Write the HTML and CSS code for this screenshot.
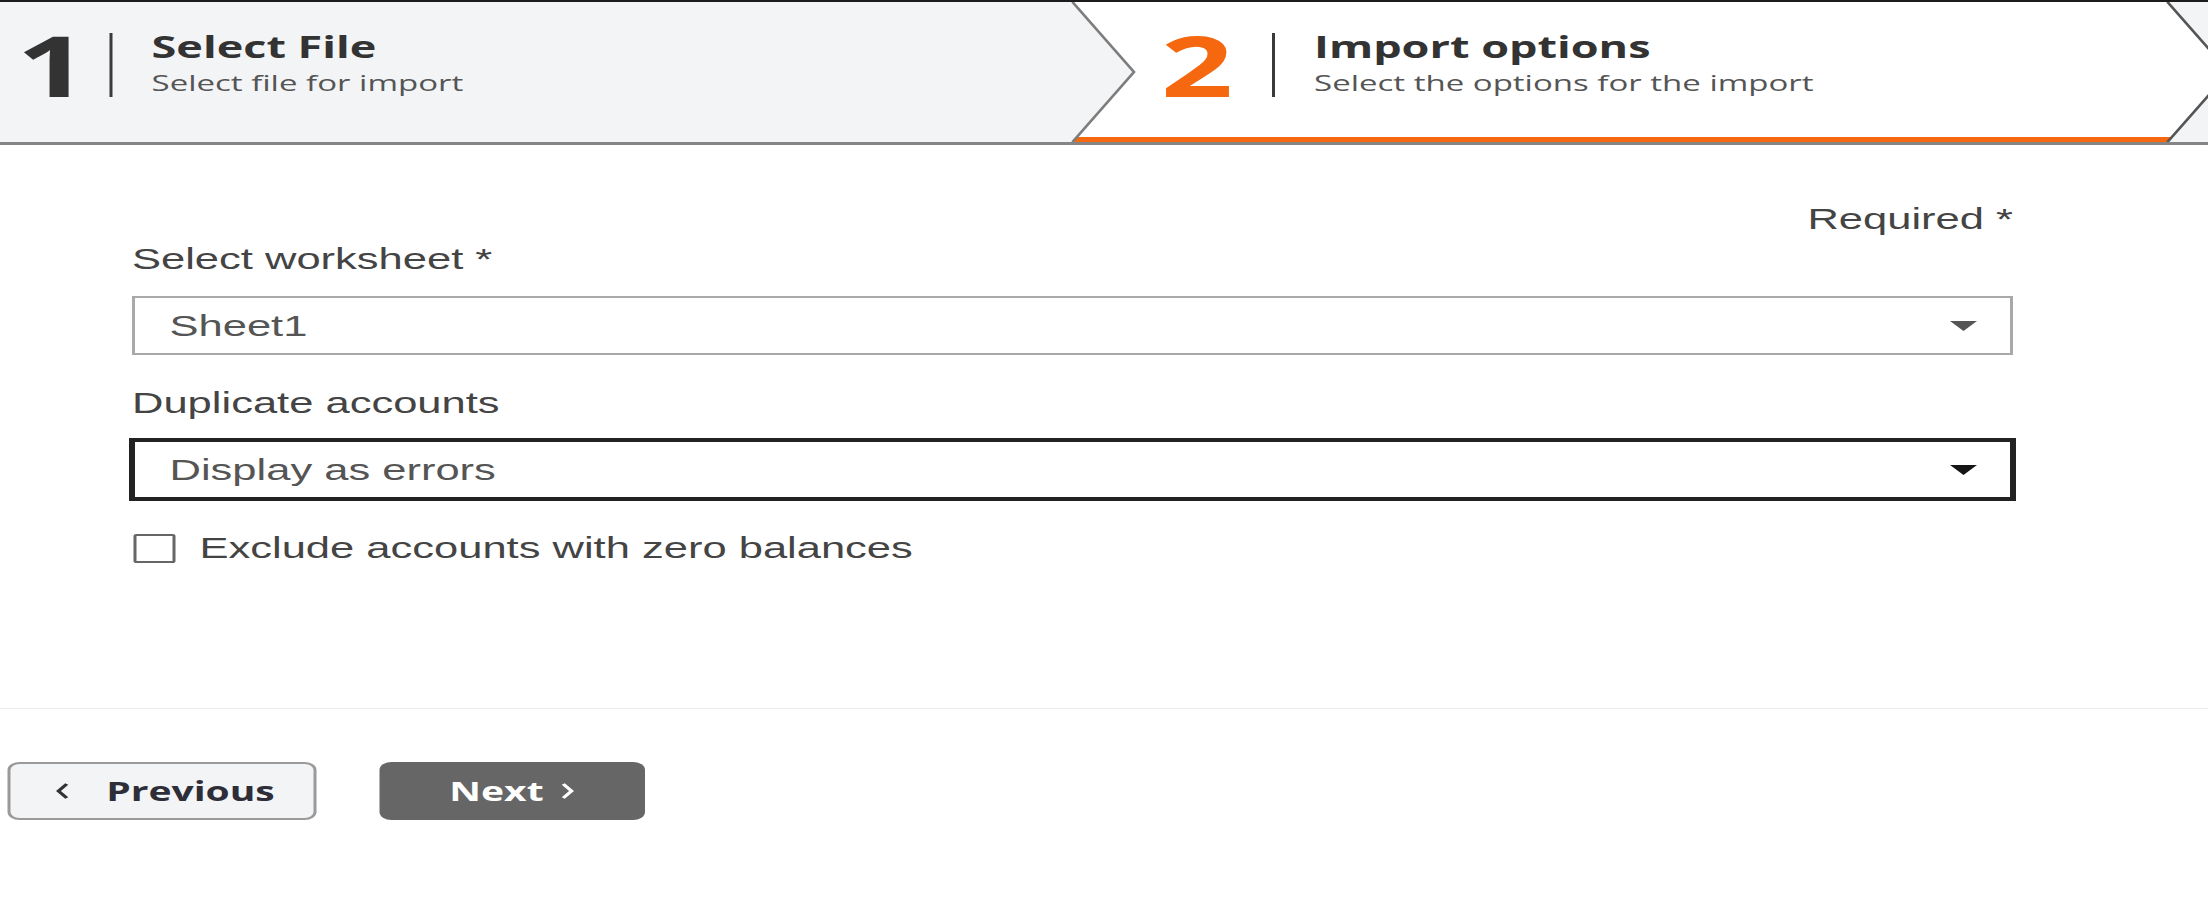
FILE: index.html
```html
<!DOCTYPE html>
<html lang="en">
<head>
<meta charset="utf-8">
<title>Import wizard</title>
<link rel="stylesheet" href="styles.css">
</head>
<body>
<div class="page">
  <header class="wizard">
    <svg class="wizard-bg" viewBox="0 0 1472 140" preserveAspectRatio="none" aria-hidden="true">
      <polygon points="715,0 1445,0 1486,70 1445,140 715,140 756,70" fill="#ffffff"/>
      <polygon points="718,135 1448,135 1445,140 715,140" fill="#f5680f"/>
      <polyline points="715,0 756,70 715,140" fill="none" stroke="#7d7d7d" stroke-width="2"/>
      <polyline points="1445,0 1486,70 1445,140" fill="none" stroke="#555" stroke-width="2"/>
    </svg>
    <div class="step step-done">
      <div class="step-num">1</div>
      <div class="step-sep"></div>
      <div class="step-text">
        <div class="step-title">Select File</div>
        <div class="step-sub">Select file for import</div>
      </div>
    </div>
    <div class="step step-active">
      <div class="step-num">2</div>
      <div class="step-sep"></div>
      <div class="step-text">
        <div class="step-title">Import options</div>
        <div class="step-sub">Select the options for the import</div>
      </div>
    </div>
  </header>

  <main class="form">
    <div class="required">Required *</div>
    <div class="field">
      <label class="field-label">Select worksheet *</label>
      <div class="select"><span>Sheet1</span><span class="caret"></span></div>
    </div>
    <div class="field field-gap">
      <label class="field-label">Duplicate accounts</label>
      <div class="select select-focus"><span>Display as errors</span><span class="caret caret-dark"></span></div>
    </div>
    <label class="check"><span class="check-box"></span><span>Exclude accounts with zero balances</span></label>
  </main>

  <footer class="actions">
    <button class="btn btn-prev" type="button">
      <svg class="chev" viewBox="0 0 9 18" aria-hidden="true"><polyline points="7.5,2 2,9 7.5,16" fill="none" stroke="#333" stroke-width="2.6"/></svg>
      <span>Previous</span>
    </button>
    <button class="btn btn-next" type="button">
      <span>Next</span>
      <svg class="chev" viewBox="0 0 9 18" aria-hidden="true"><polyline points="1.5,2 7,9 1.5,16" fill="none" stroke="#fff" stroke-width="2.6"/></svg>
    </button>
  </footer>
</div>
</body>
</html>
```
FILE: styles.css
```css
html, body {
  margin: 0;
  padding: 0;
  background: #ffffff;
  overflow: hidden;
}

.page {
  width: 1472px;
  transform: scaleX(1.5);
  transform-origin: 0 0;
  font-family: "Liberation Sans", Arial, sans-serif;
  color: #444;
}

/* ---------- wizard header ---------- */
.wizard {
  position: relative;
  display: flex;
  height: 140px;
  background: #f3f4f6;
  border-top: 2px solid #1c1c1c;
  border-bottom: 3px solid #858585;
}

.wizard-bg {
  position: absolute;
  left: 0;
  top: 0;
  width: 100%;
  height: 100%;
}

.step {
  position: relative;
  display: flex;
  align-items: flex-start;
  box-sizing: border-box;
}

.step-done {
  width: 756px;
  padding-left: 11px;
}

.step-active {
  flex: 1;
  padding-left: 18px;
}

.step-num {
  margin-top: 21px;
  font-family: "Open Sans", sans-serif;
  font-weight: 700;
  font-size: 84px;
  line-height: 83px;
  color: #333333;
}

.step-active .step-num {
  color: #f5680f;
}

.step-sep {
  width: 2px;
  height: 64px;
  margin: 31px 26px 0 26px;
  background: #3a3a3a;
}

.step-done .step-sep {
  margin-left: 14px;
}

.step-text {
  margin-top: 28px;
  font-family: "Open Sans", sans-serif;
}

.step-title {
  font-weight: 700;
  font-size: 30px;
  line-height: 34px;
  color: #333333;
}

.step-sub {
  font-size: 22px;
  line-height: 37px;
  color: #555555;
}

/* ---------- form ---------- */
.form {
  width: 1254px;
  margin-left: 88px;
  padding-top: 56px;
  font-size: 29px;
  line-height: 36px;
}

.required {
  text-align: right;
  color: #444;
}

.field {
  margin-top: 4px;
}

.field-gap {
  margin-top: 30px;
}

.field-label {
  display: block;
  margin-bottom: 19px;
  color: #444;
}

.select {
  display: flex;
  align-items: center;
  justify-content: space-between;
  height: 59px;
  box-sizing: border-box;
  padding: 0 22px 0 23px;
  border: 2px solid #a9a9a9;
  background: #ffffff;
  color: #555;
}

.select-focus {
  border-color: #222;
  outline: 2px solid #222;
}

.caret {
  width: 0;
  height: 0;
  border-left: 9px solid transparent;
  border-right: 9px solid transparent;
  border-top: 10px solid #555;
}

.caret-dark {
  border-top-color: #151515;
}

.check {
  display: flex;
  align-items: center;
  gap: 16px;
  margin-top: 31px;
  color: #444;
}

.check-box {
  width: 28px;
  height: 29px;
  box-sizing: border-box;
  margin-left: 1px;
  border: 2px solid #666;
  border-radius: 2px;
  background: #fff;
}

/* ---------- footer actions ---------- */
.actions {
  display: flex;
  gap: 42px;
  margin-top: 142px;
  padding: 53px 0 0 5px;
  border-top: 1px solid #ececec;
}

.btn {
  display: flex;
  align-items: center;
  justify-content: center;
  height: 58px;
  box-sizing: border-box;
  border-radius: 8px;
  font-family: "Open Sans", sans-serif;
  font-weight: 700;
  font-size: 26px;
  cursor: pointer;
}

.chev {
  width: 9px;
  height: 18px;
}

.btn-prev {
  width: 206px;
  gap: 25px;
  padding-left: 10px;
  border: 2px solid #9a9a9a;
  background: #f3f4f6;
  color: #2e2e38;
}

.btn-next {
  width: 177px;
  gap: 12px;
  border: 0;
  background: #666666;
  color: #ffffff;
}
```
